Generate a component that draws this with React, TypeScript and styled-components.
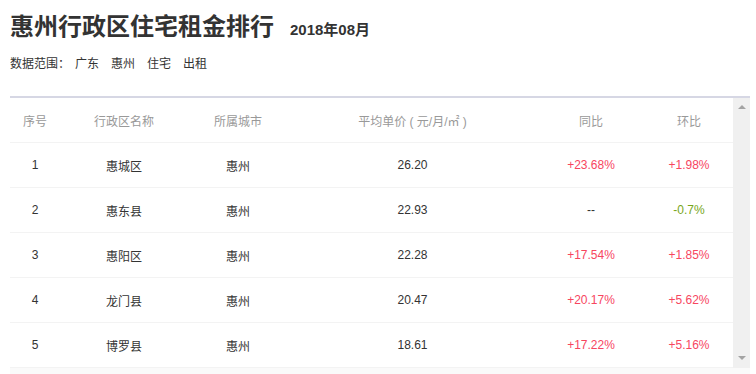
import styled, { createGlobalStyle } from 'styled-components';

const GlobalStyle = createGlobalStyle`
  body {
    margin: 0;
    background: #fff;
    font-family: "Liberation Sans", "Noto Sans CJK SC", sans-serif;
    color: #333;
  }
`;

const ScPage = styled.div`
  width: 756px;
  height: 374px;
  overflow: hidden;
  padding: 10px 6px 0 10px;
  box-sizing: border-box;
`;

const ScTitleRow = styled.div`
  display: flex;
  align-items: baseline;
  gap: 16px;
  height: 36px;
`;

const ScTitle = styled.h1`
  margin: 0;
  font-size: 24px;
  font-weight: bold;
  line-height: 34px;
  color: #333;
`;

const ScMonth = styled.span`
  font-size: 15px;
  font-weight: bold;
  color: #333;
`;

const ScScope = styled.div`
  display: flex;
  gap: 12px;
  margin-top: 8px;
  font-size: 12px;
  line-height: 20px;
  color: #333;
`;

const ScScopeLabel = styled.span`
  margin-right: -7px;
`;

const ScBox = styled.div`
  margin-top: 22px;
  border-top: 2px solid #d6d7e4;
  display: flex;
`;

const ScTable = styled.table`
  flex: 1;
  border-collapse: collapse;
  table-layout: fixed;
  font-size: 12px;

  th {
    height: 44px;
    font-weight: normal;
    color: #999;
    border-bottom: 1px solid #f3f3f3;
  }

  td {
    height: 44px;
    border-bottom: 1px solid #f3f3f3;
    color: #333;
  }

  th,
  td {
    padding: 0;
    text-align: center;
  }
`;

const ScRate = styled.td<{ $tone: 'up' | 'down' | 'none' }>`
  && {
    color: ${(p) => (p.$tone === 'up' ? '#f7465f' : p.$tone === 'down' ? '#78a61c' : '#333')};
  }
`;

const ScRail = styled.div`
  width: 17px;
  background: #f0f0f0;
  display: flex;
  flex-direction: column;
  justify-content: space-between;
  align-items: center;
  padding: 7px 0 8px;
`;

const ScArrow = styled.span<{ $down?: boolean }>`
  width: 0;
  height: 0;
  border-left: 4px solid transparent;
  border-right: 4px solid transparent;
  ${(p) => (p.$down ? 'border-top: 4px solid #a3a3a3;' : 'border-bottom: 4px solid #a3a3a3;')}
`;

const ScFooter = styled.div`
  height: 8px;
  background: #fafafa;
`;

const rows = [
  { no: 1, name: '惠城区', city: '惠州', price: '26.20', yoy: '+23.68%', mom: '+1.98%' },
  { no: 2, name: '惠东县', city: '惠州', price: '22.93', yoy: '--', mom: '-0.7%' },
  { no: 3, name: '惠阳区', city: '惠州', price: '22.28', yoy: '+17.54%', mom: '+1.85%' },
  { no: 4, name: '龙门县', city: '惠州', price: '20.47', yoy: '+20.17%', mom: '+5.62%' },
  { no: 5, name: '博罗县', city: '惠州', price: '18.61', yoy: '+17.22%', mom: '+5.16%' },
];

const tone = (v: string) => (v.startsWith('+') ? 'up' : v.startsWith('-') && v !== '--' ? 'down' : 'none');

function App() {
  return (
    <ScPage>
      <GlobalStyle />
      <ScTitleRow>
        <ScTitle>惠州行政区住宅租金排行</ScTitle>
        <ScMonth>2018年08月</ScMonth>
      </ScTitleRow>
      <ScScope>
        <ScScopeLabel>数据范围：</ScScopeLabel>
        <span>广东</span>
        <span>惠州</span>
        <span>住宅</span>
        <span>出租</span>
      </ScScope>

      <ScBox>
        <ScTable>
          <colgroup>
            <col style={{ width: 50 }} />
            <col style={{ width: 128 }} />
            <col style={{ width: 100 }} />
            <col style={{ width: 249 }} />
            <col style={{ width: 108 }} />
            <col />
          </colgroup>
          <thead>
            <tr>
              <th>序号</th>
              <th>行政区名称</th>
              <th>所属城市</th>
              <th>平均单价 ( 元/月/㎡ )</th>
              <th>同比</th>
              <th>环比</th>
            </tr>
          </thead>
          <tbody>
            {rows.map((r) => (
              <tr key={r.no}>
                <td>{r.no}</td>
                <td>{r.name}</td>
                <td>{r.city}</td>
                <td>{r.price}</td>
                <ScRate $tone={tone(r.yoy)}>{r.yoy}</ScRate>
                <ScRate $tone={tone(r.mom)}>{r.mom}</ScRate>
              </tr>
            ))}
          </tbody>
        </ScTable>
        <ScRail>
          <ScArrow />
          <ScArrow $down />
        </ScRail>
      </ScBox>
      <ScFooter />
    </ScPage>
  );
}

export default App;
